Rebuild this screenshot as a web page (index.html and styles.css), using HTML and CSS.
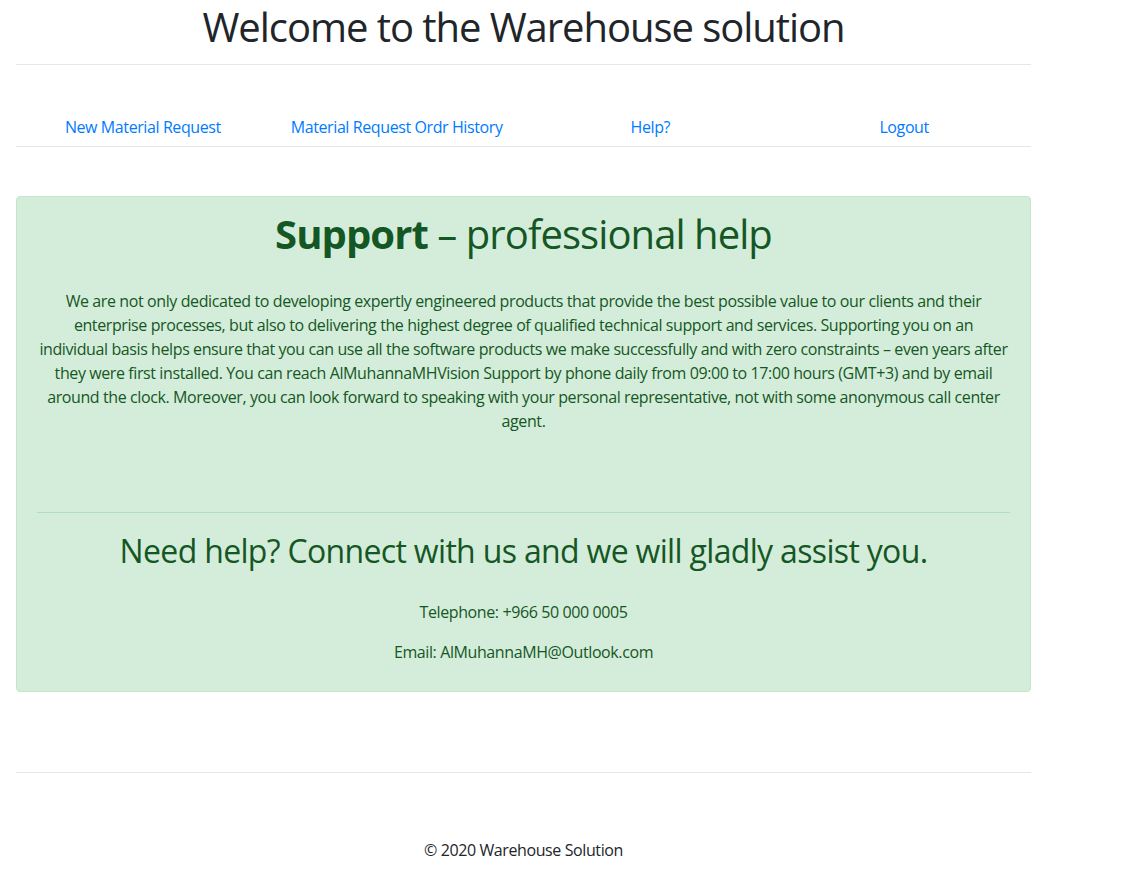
FILE: index.html
```html
<!DOCTYPE html>
<html lang="en">
<head>
<meta charset="utf-8">
<title>Warehouse solution</title>
<link rel="stylesheet" href="styles.css">
</head>
<body>
<div class="container">
  <header class="site-header">
    <h1 class="site-title">Welcome to the Warehouse solution</h1>
  </header>
  <hr class="rule">
  <nav class="main-nav">
    <a class="nav-link" href="#">New Material Request</a>
    <a class="nav-link" href="#">Material Request Ordr History</a>
    <a class="nav-link" href="#">Help?</a>
    <a class="nav-link" href="#">Logout</a>
  </nav>
  <hr class="rule">
  <main class="support">
    <h1 class="support-title"><strong>Support</strong> – professional help</h1>
    <p class="support-text">We are not only dedicated to developing expertly engineered products that provide the best possible value to our clients and their enterprise processes, but also to delivering the highest degree of qualified technical support and services. Supporting you on an individual basis helps ensure that you can use all the software products we make successfully and with zero constraints – even years after they were first installed. You can reach AlMuhannaMHVision Support by phone daily from 09:00 to 17:00 hours (GMT+3) and by email around the clock. Moreover, you can look forward to speaking with your personal representative, not with some anonymous call center agent.</p>
    <hr class="support-rule">
    <h2 class="contact-title">Need help? Connect with us and we will gladly assist you.</h2>
    <p class="contact-line">Telephone: +966 50 000 0005</p>
    <p class="contact-line">Email: AlMuhannaMH@Outlook.com</p>
  </main>
  <hr class="rule footer-rule">
  <footer class="site-footer">© 2020 Warehouse Solution</footer>
</div>
</body>
</html>
```
FILE: styles.css
```css
* { box-sizing: border-box; }
html, body { margin: 0; padding: 0; background: #fff; }
body {
  font-family: "Open Sans", "Noto Sans", "Liberation Sans", sans-serif;
  font-size: 16px;
  line-height: 24px;
  letter-spacing: -0.4px;
  color: #212529;
}
.container {
  width: 1015px;
  margin-left: 16px;
}
.site-title {
  margin: 3px 0 0;
  font-size: 40px;
  line-height: 48px;
  font-weight: 400;
  letter-spacing: -1.05px;
  text-align: center;
  color: #212529;
}
.rule {
  margin: 0;
  border: 0;
  border-top: 1px solid #e6e6e6;
}
.site-header + .rule { margin-top: 13px; }
.main-nav {
  display: grid;
  grid-template-columns: repeat(4, 1fr);
  padding: 50px 0 7px;
}
.nav-link {
  text-align: center;
  color: #007bff;
  text-decoration: none;
}
.support {
  margin-top: 49px;
  padding: 13px 20px 27px;
  background: #d4edda;
  border: 1px solid #c3e6cb;
  border-radius: 4px;
  color: #155724;
  text-align: center;
}
.support-title {
  margin: 0;
  font-size: 40px;
  line-height: 48px;
  font-weight: 400;
  letter-spacing: -0.93px;
}
.support-title strong { font-weight: 700; }
.support-text {
  margin: 31px 2px 0;
}
.support-rule {
  margin: 79px 0 0;
  border: 0;
  border-top: 1px solid #b1dfbb;
}
.contact-title {
  margin: 19px 0 0;
  font-size: 32px;
  line-height: 38px;
  font-weight: 400;
  letter-spacing: -0.67px;
}
.contact-line { margin: 30px 0 0; }
.contact-line + .contact-line { margin-top: 16px; }
.footer-rule { margin-top: 80px; }
.site-footer {
  margin-top: 65px;
  text-align: center;
  color: #212529;
}
```
